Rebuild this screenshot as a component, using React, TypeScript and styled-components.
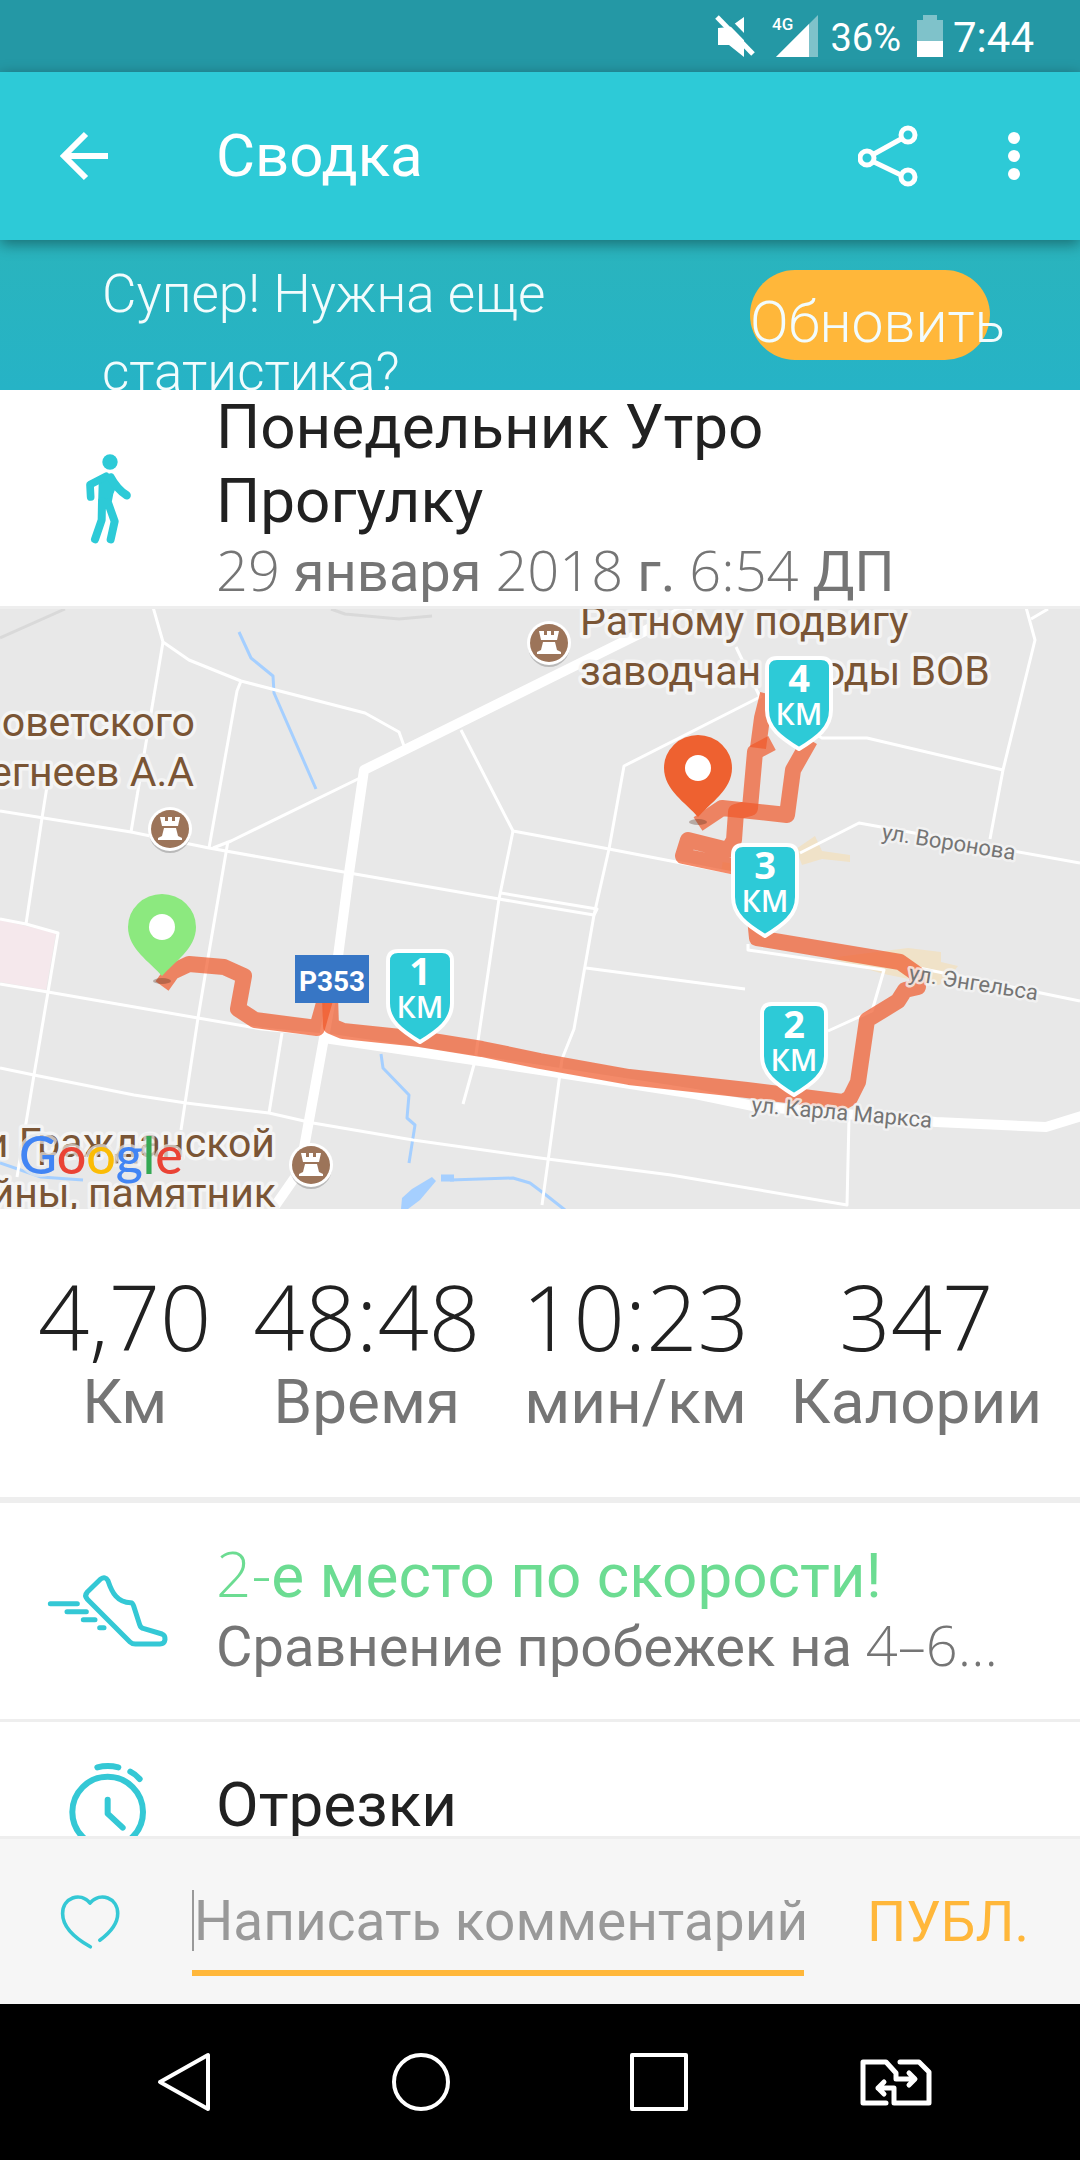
import React from "react";
import styled, { createGlobalStyle } from "styled-components";

const color = {
  teal: "#2dcad7",
  tealDark: "#2498a5",
  amber: "#ffb73a",
  ink: "#212121",
  grey: "#757575",
  line: "#eeeeee",
  green: "#6cdc92",
  route: "#f0592a",
  label: "#7a5535",
};

const sans = `Roboto, "Liberation Sans", sans-serif`;
const humanist = `"Open Sans", ${sans}`;

const GlobalStyle = createGlobalStyle`
  *, *::before, *::after { box-sizing: border-box; }
  body { margin: 0; background: #fff; font-family: ${sans}; color: ${color.ink}; }
  button, input { font: inherit; border: 0; margin: 0; padding: 0; background: none; color: inherit; }
  h1, h2, p, dl, dt, dd { margin: 0; font-weight: 400; }
  svg { display: block; }
`;

const Screen = styled.div`
  min-height: 100vh;
  display: flex;
  flex-direction: column;
  overflow: hidden;
`;

const StatusBar = styled.div`
  height: 72px;
  padding: 0 46px 0 0;
  display: flex;
  align-items: center;
  justify-content: flex-end;
  background: ${color.tealDark};
  color: #fff;
  line-height: 48px;
`;

const StatusText = styled.span<{ $size: number }>`
  font-size: ${(p) => p.$size}px;
  padding-top: 3px;
`;

const StatusIcon = styled.svg<{ $gap: number }>`
  margin-right: ${(p) => p.$gap}px;
`;

const Toolbar = styled.header`
  height: 168px;
  display: flex;
  align-items: center;
  background: ${color.teal};
  color: #fff;
  box-shadow: 0 4px 14px rgba(0, 0, 0, 0.4);
  z-index: 1;
`;

const ToolButton = styled.button<{ $width: number }>`
  width: ${(p) => p.$width}px;
  height: 120px;
  display: grid;
  place-items: center;
`;

const ToolTitle = styled.h1`
  flex: 1;
  padding-left: 48px;
  font-size: 60px;
  line-height: 74px;
`;

const Banner = styled.section`
  height: 150px;
  display: flex;
  align-items: flex-start;
  justify-content: space-between;
  padding: 15px 90px 0 102px;
  overflow: hidden;
  background: linear-gradient(#2ab4bd, #26b3c6);
  color: #f2fcfd;
`;

const BannerText = styled.p`
  max-width: 500px;
  font-size: 53px;
  font-weight: 300;
  line-height: 78px;
`;

const UpgradeButton = styled.button`
  flex: none;
  width: 240px;
  height: 90px;
  margin-top: 15px;
  padding-top: 14px;
  border-radius: 45px;
  background: ${color.amber};
  font-size: 57px;
  font-weight: 300;
  line-height: 78px;
  text-align: left;
  white-space: nowrap;
`;

const Row = styled.section<{ $height: number }>`
  height: ${(p) => p.$height}px;
  display: grid;
  grid-template-columns: 216px 1fr;
  align-items: center;
  padding-right: 60px;
  border-bottom: 3px solid ${color.line};
  box-sizing: content-box;
`;

const RowIcon = styled.div`
  display: grid;
  place-items: center;
`;

const RowText = styled.div`
  min-width: 0;
  padding-bottom: 2px;
`;

const RowTitle = styled.h2<{ $tone?: string }>`
  font-size: 62px;
  line-height: 74px;
  color: ${(p) => p.$tone ?? color.ink};
`;

const RowNote = styled.p`
  font-size: 56px;
  line-height: 68px;
  color: ${color.grey};
  white-space: nowrap;
  overflow: hidden;
  text-overflow: ellipsis;
`;

const Digits = styled.span`
  font-family: ${humanist};
  font-weight: 300;
  line-height: 1;
`;

const MapBox = styled.section`
  height: 600px;
  overflow: hidden;
  background: #e8e8e8;

  svg { width: 100%; height: 100%; }
`;

const Stats = styled.dl`
  height: 288px;
  display: flex;
  justify-content: space-between;
  padding: 58px 38px 0;
`;

const Stat = styled.div`
  display: flex;
  flex-direction: column-reverse;
  justify-content: flex-end;
  text-align: center;
`;

const StatValue = styled.dd`
  font-family: ${humanist};
  font-size: 90px;
  font-weight: 300;
  line-height: 98px;
`;

const StatLabel = styled.dt`
  font-size: 62px;
  line-height: 74px;
  color: ${color.grey};
`;

const Divider = styled.hr`
  width: 100%;
  height: 6px;
  margin: 0;
  border: 0;
  background: ${color.line};
`;

const Scroll = styled.main`
  flex: 1 1 0;
  min-height: 0;
  overflow: hidden;
`;

const Composer = styled.form`
  height: 168px;
  display: flex;
  align-items: flex-start;
  border-top: 3px solid ${color.line};
  background: #f6f6f6;
`;

const LikeButton = styled.button`
  width: 192px;
  height: 165px;
  padding-left: 60px;
`;

const Field = styled.label`
  flex: 1;
  min-width: 0;
  margin-top: 51px;
  padding-bottom: 19px;
  border-bottom: 6px solid ${color.amber};
`;

const CommentInput = styled.input`
  display: block;
  width: 100%;
  height: 61px;
  border-left: 2px solid #999;
  font-size: 55px;
  outline: none;

  &::placeholder { color: #999; opacity: 1; }
`;

const PublishButton = styled.button`
  width: 276px;
  height: 165px;
  padding-left: 12px;
  color: ${color.amber};
  font-size: 55px;
`;

const NavBar = styled.nav`
  height: 156px;
  padding: 0 65px;
  display: grid;
  grid-template-columns: repeat(4, 1fr);
  background: #000;
`;

const NavButton = styled.button`
  display: grid;
  place-items: center;
`;

const NavIcon = ({ children }: { children: React.ReactNode }) => (
  <svg width="76" height="64" viewBox="0 0 76 64" fill="none" stroke="#fff" strokeWidth="4" strokeLinejoin="round" strokeLinecap="round">
    {children}
  </svg>
);

const minorRoads = [
  "151,600 163,642 189,660 241,681 365,713 399,732 404,746",
  "163,642 131,832",
  "241,681 237,691 209,848",
  "0,811 131,832 209,848 355,874 499,899 540,906 594,915",
  "501,893 597,909 594,915",
  "213,848 231,841 360,778",
  "48,780 42,818 26,924",
  "0,919 26,924 58,933 48,992 34,1075 17,1177",
  "0,984 48,992 198,1018 262,1029 324,1035",
  "228,841 208,958 198,1018 181,1130",
  "0,1068 34,1075 134,1095 186,1103 269,1113 313,1123 413,1140 540,1158 671,1175 847,1205 849,1118",
  "282,1033 269,1113",
  "461,730 513,831 540,836 609,849 733,873",
  "513,831 499,899 475,1061 463,1104",
  "736,647 760,697 624,766 609,849 594,915 574,1029 562,1059 542,1205",
  "790,720 822,738 867,738 1003,770",
  "1024,600 1035,640 1003,770 990,839",
  "1031,619 1048,609",
  "800,853 859,823 1080,863",
  "748,944 748,950 884,970 872,1011 828,1031",
  "919,968 1080,1001",
  "586,968 745,989",
];

const majorRoads = [
  "690,606 643,632 540,683 364,770 349,873 337,964 324,1038 300,1170 275,1206",
  "324,1038 540,1070 695,1094 753,1106 936,1122 1046,1127 1085,1115",
];

const streams = [
  "239,632 251,658 273,676 274,693 316,789",
  "381,1054 383,1068 409,1095 407,1118 415,1125 409,1163",
  "450,1180 513,1178 530,1183 546,1195 565,1210",
  "0,1163 41,1177 83,1180",
];

const track = [
  "162,986 172,972 189,964 224,967 244,976 238,1009 255,1020 317,1028 326,996",
  "330,996 331,1026 343,1031 420,1039 482,1049 540,1061 629,1077 747,1090 843,1102 850,1098 858,1082 867,1020 898,1001 905,990 918,987 917,974 900,962 757,938 754,908",
  "745,869 683,856 688,840 728,850 734,840 736,812 750,808 755,752 772,743",
  "758,748 762,718 768,694",
  "810,740 793,770 787,815 722,808 698,824",
];

const milestones = [
  { n: 4, x: 799, y: 656 },
  { n: 3, x: 765, y: 843 },
  { n: 1, x: 420, y: 949 },
  { n: 2, x: 794, y: 1002 },
];

const placeLabels: { x: number; y: number; text: string; end?: boolean }[] = [
  { x: 195, y: 736, text: "оветского", end: true },
  { x: 194, y: 786, text: "егнеев А.А", end: true },
  { x: 580, y: 635, text: "Ратному подвигу" },
  { x: 580, y: 685, text: "заводчан в годы ВОВ" },
  { x: 275, y: 1157, text: "и Гражданской", end: true },
  { x: 276, y: 1207, text: "йны, памятник", end: true },
];

const streets = [
  { x: 881, y: 839, turn: 9, text: "ул. Воронова" },
  { x: 908, y: 980, turn: 9, text: "ул. Энгельса" },
  { x: 751, y: 1112, turn: 5, text: "ул. Карла Маркса" },
];

const Castle = ({ x, y }: { x: number; y: number }) => (
  <g transform={`translate(${x} ${y})`}>
    <circle cy="3" r="21" fill="#000" opacity=".2" />
    <circle r="22" fill="#fff" />
    <circle r="19" fill="#9c7459" />
    <path d="M-10-12h5v4h3v-4h4v4h3v-4h5l-2 9H-8zM-6-1H6l2 8 4 2v2h-24V9l4-2z" fill="#fff" />
  </g>
);

const Pin = ({ x, y, fill }: { x: number; y: number; fill: string }) => (
  <g transform={`translate(${x} ${y})`}>
    <ellipse cy="5" rx="9" ry="3" fill="#5a3020" opacity=".35" />
    <path d="M0 0C-12-14-34-27-34-49a34 33 0 0 1 68 0C34-27 12-14 0 0z" fill={fill} />
    <circle cy="-49" r="13" fill="#fff" />
  </g>
);

const Milestone = ({ n, x, y }: { n: number; x: number; y: number }) => (
  <g transform={`translate(${x} ${y})`}>
    <path
      d="M-22 2H22Q32 2 32 12V54C32 72 18 82 0 93C-18 82-32 72-32 54V12Q-32 2-22 2Z"
      fill={color.teal}
      stroke="#fff"
      strokeWidth="4"
      strokeLinejoin="round"
    />
    <text y="36" textAnchor="middle" fontFamily={humanist} fontSize="38" fontWeight="700" fill="#fff">{n}</text>
    <text y="69" textAnchor="middle" fontFamily={humanist} fontSize="30" fontWeight="600" fill="#fff">КМ</text>
  </g>
);

const RouteMap = () => (
  <svg viewBox="0 609 1080 600" preserveAspectRatio="xMidYMid slice" fill="none" strokeLinejoin="round">
    <polygon points="0,920 56,933 46,990 0,982" fill="#f5e8ec" />
    <polygon points="796,849 815,836 822,851 850,855 850,862 822,859 802,865" fill="#f0e2c8" />
    <polygon points="829,958 908,948 941,952 941,962 958,966 950,976 939,985 884,974" fill="#f0e2c8" />
    <polyline points="722,866 745,870" stroke="#f0e2c8" strokeWidth="8" />
    <g stroke="#d9d9d9" strokeWidth="3">
      <polyline points="0,638 65,609" />
      <polyline points="331,609 345,614 399,619 432,616" />
    </g>
    <g stroke="#a5cfff" strokeWidth="3">
      {streams.map((p) => <polyline key={p} points={p} />)}
    </g>
    <polygon points="401,1209 402,1198 412,1189 432,1177 436,1181 420,1200 408,1209" fill="#a5cfff" />
    <polyline points="441,1178 454,1178" stroke="#a5cfff" strokeWidth="7" />
    <g stroke="#fff" strokeWidth="3">
      {minorRoads.map((p) => <polyline key={p} points={p} />)}
    </g>
    <g stroke="#fff" strokeWidth="10">
      {majorRoads.map((p) => <polyline key={p} points={p} />)}
    </g>
    <g stroke={color.route} strokeWidth="16">
      {track.map((p) => <polyline key={p} points={p} strokeOpacity=".7" />)}
    </g>
    <g fill={color.label} fontFamily={sans} fontSize="41" stroke="#f4f4f4" strokeWidth="7" paintOrder="stroke">
      {placeLabels.map((l) => (
        <text key={l.text} x={l.x} y={l.y} textAnchor={l.end ? "end" : "start"}>{l.text}</text>
      ))}
    </g>
    <g fill="#757575" fontFamily={sans} fontSize="22" stroke="#f4f4f4" strokeWidth="5" strokeOpacity=".8" paintOrder="stroke">
      {streets.map((s) => (
        <text key={s.text} transform={`translate(${s.x} ${s.y}) rotate(${s.turn})`}>{s.text}</text>
      ))}
    </g>
    <Castle x={549} y={643} />
    <Castle x={170} y={829} />
    <Castle x={311} y={1165} />
    <rect x="295" y="955" width="74" height="48" fill="#3776c5" />
    <text x="332" y="991" textAnchor="middle" fontFamily={sans} fontSize="28" fontWeight="700" fill="#fff">P353</text>
    <Pin x={162} y={976} fill="#8ce97f" />
    <Pin x={698} y={817} fill="#ee6130" />
    {milestones.map((m) => <Milestone key={m.n} {...m} />)}
    <text x="19" y="1174" fontFamily="Lato, sans-serif" fontSize="52" fontWeight="500" stroke="#e8e8e8" strokeOpacity=".7" strokeWidth="6" paintOrder="stroke">
      <tspan fill="#4285f4">G</tspan>
      <tspan fill="#ea4335">o</tspan>
      <tspan fill="#fbbc05">o</tspan>
      <tspan fill="#4285f4">g</tspan>
      <tspan fill="#34a853">l</tspan>
      <tspan fill="#ea4335">e</tspan>
    </text>
  </svg>
);

const stats = [
  { value: "4,70", label: "Км" },
  { value: "48:48", label: "Время" },
  { value: "10:23", label: "мин/км" },
  { value: "347", label: "Калории" },
];

export default function App() {
  return (
    <Screen>
      <GlobalStyle />
      <StatusBar>
        <StatusIcon $gap={17} width="40" height="42" viewBox="0 0 40 42" fill="#fff">
          <path d="M3 13v17h11l15 12V2L15 12z" />
          <path d="M6-2l36 37" stroke={color.tealDark} strokeWidth="5" />
          <path d="M2 2l36 37" stroke="#fff" strokeWidth="5" />
        </StatusIcon>
        <StatusIcon $gap={12} width="46" height="44" viewBox="0 0 46 44">
          <path d="M46 1v42H4z" fill="#7fc2ca" />
          <path d="M37 10v33H4z" fill="#fff" />
          <text x="0" y="16" fontFamily={sans} fontSize="17" fontWeight="500" fill="#fff">4G</text>
        </StatusIcon>
        <StatusText $size={38}>36%</StatusText>
        <StatusIcon $gap={10} width="42" height="44" viewBox="-16 0 42 44">
          <path d="M6 1h14v5h6v21H0V6h6z" fill="#7fc2ca" />
          <path d="M0 27h26v16H0z" fill="#fff" />
        </StatusIcon>
        <StatusText $size={42}>7:44</StatusText>
      </StatusBar>

      <Toolbar>
        <ToolButton $width={168} type="button" aria-label="Назад">
          <svg width="50" height="50" viewBox="0 0 50 50" fill="none" stroke="#fff" strokeWidth="6">
            <path d="M49 25H6M27 3L5 25l22 22" />
          </svg>
        </ToolButton>
        <ToolTitle>Сводка</ToolTitle>
        <ToolButton $width={120} type="button" aria-label="Поделиться">
          <svg width="60" height="62" viewBox="0 0 60 62" fill="none" stroke="#fff" strokeWidth="5">
            <path d="M16 29L43 14M16 37L43 50" />
            <circle cx="50" cy="10" r="7" />
            <circle cx="9" cy="33" r="7" />
            <circle cx="50" cy="52" r="7" />
          </svg>
        </ToolButton>
        <ToolButton $width={132} type="button" aria-label="Ещё">
          <svg width="12" height="48" viewBox="0 0 12 48" fill="#fff">
            <circle cx="6" cy="6" r="6" />
            <circle cx="6" cy="24" r="6" />
            <circle cx="6" cy="42" r="6" />
          </svg>
        </ToolButton>
      </Toolbar>

      <Scroll>
        <Banner>
          <BannerText>Супер! Нужна еще статистика?</BannerText>
          <UpgradeButton type="button">Обновить</UpgradeButton>
        </Banner>

        <Row $height={216}>
          <RowIcon>
            <svg width="80" height="90" viewBox="-2 40 240 270" fill="none" stroke={color.teal} strokeLinecap="round" strokeLinejoin="round">
              <circle cx="124" cy="64" r="23" fill={color.teal} stroke="none" />
              <path d="M90 130Q86 112 104 104Q124 96 136 118L142 140Q132 160 130 180L112 206L88 200Z" fill={color.teal} stroke="none" />
              <path d="M112 107L64 132L66 169" strokeWidth="23" />
              <path d="M126 110Q144 144 174 164" strokeWidth="25" />
              <path d="M100 182L99 238L79 296M118 186L138 242L126 296" strokeWidth="24" />
            </svg>
          </RowIcon>
          <RowText>
            <RowTitle>Понедельник Утро<br />Прогулку</RowTitle>
            <RowNote>
              <Digits>29</Digits> января <Digits>2018</Digits> г. <Digits>6:54</Digits> ДП
            </RowNote>
          </RowText>
        </Row>

        <MapBox aria-label="Карта маршрута"><RouteMap /></MapBox>

        <Stats>
          {stats.map((s) => (
            <Stat key={s.label}>
              <StatLabel>{s.label}</StatLabel>
              <StatValue>{s.value}</StatValue>
            </Stat>
          ))}
        </Stats>
        <Divider />

        <Row $height={216}>
          <RowIcon>
            <svg width="124" height="74" viewBox="48 44 372 222" fill="none" stroke="#34c8d5" strokeWidth="15" strokeLinecap="round" strokeLinejoin="round">
              <path d="M61 133H142M111 157H169M160 181H195M209 205H222" />
              <path d="M212 59Q226 50 234 64C246 100 262 130 302 130Q308 130 311 140L329 196Q332 206 342 208L396 224Q406 228 405 241Q403 254 390 254H316Q306 254 300 248L172 120Q162 109 172 98Z" />
            </svg>
          </RowIcon>
          <RowText>
            <RowTitle $tone={color.green}><Digits>2-</Digits>е место по скорости!</RowTitle>
            <RowNote>Сравнение пробежек на <Digits>4–6…</Digits></RowNote>
          </RowText>
        </Row>

        <Row $height={168}>
          <RowIcon>
            <svg width="82" height="90" viewBox="110 600 246 270" fill="none" stroke="#34c8d5" strokeWidth="18" strokeLinecap="round" strokeLinejoin="round">
              <circle cx="232" cy="753" r="106" />
              <path d="M201 619Q232 611 264 619M300 632Q316 640 328 654M232 716V758L277 800" />
            </svg>
          </RowIcon>
          <RowText>
            <RowTitle>Отрезки</RowTitle>
          </RowText>
        </Row>
      </Scroll>

      <Composer onSubmit={(e) => e.preventDefault()}>
        <LikeButton type="button" aria-label="Нравится">
          <svg width="60" height="56" viewBox="58 102 184 168" fill="none" stroke="#34c8d5" strokeWidth="11" strokeLinecap="round" strokeLinejoin="round">
            <path d="M151 262C108 238 66 204 66 160C66 112 120 92 150 128C182 92 235 112 235 160C235 190 210 220 180 242" />
          </svg>
        </LikeButton>
        <Field>
          <CommentInput aria-label="Комментарий" placeholder="Написать комментарий" />
        </Field>
        <PublishButton type="submit">ПУБЛ.</PublishButton>
      </Composer>

      <NavBar>
        <NavButton type="button" aria-label="Назад">
          <NavIcon><path d="M62 5V59L14 32z" /></NavIcon>
        </NavButton>
        <NavButton type="button" aria-label="Домой">
          <NavIcon><circle cx="38" cy="32" r="27" /></NavIcon>
        </NavButton>
        <NavButton type="button" aria-label="Недавние">
          <NavIcon><path d="M11 5h54v54H11z" /></NavIcon>
        </NavButton>
        <NavButton type="button" aria-label="Переключить">
          <NavIcon>
            <path d="M28 53H5V12H28L38 23V29H56M51 23L57 29L51 35M42 12H61L71 22V53H36V38H20M26 32L20 38L26 44" strokeWidth="5" />
          </NavIcon>
        </NavButton>
      </NavBar>
    </Screen>
  );
}
